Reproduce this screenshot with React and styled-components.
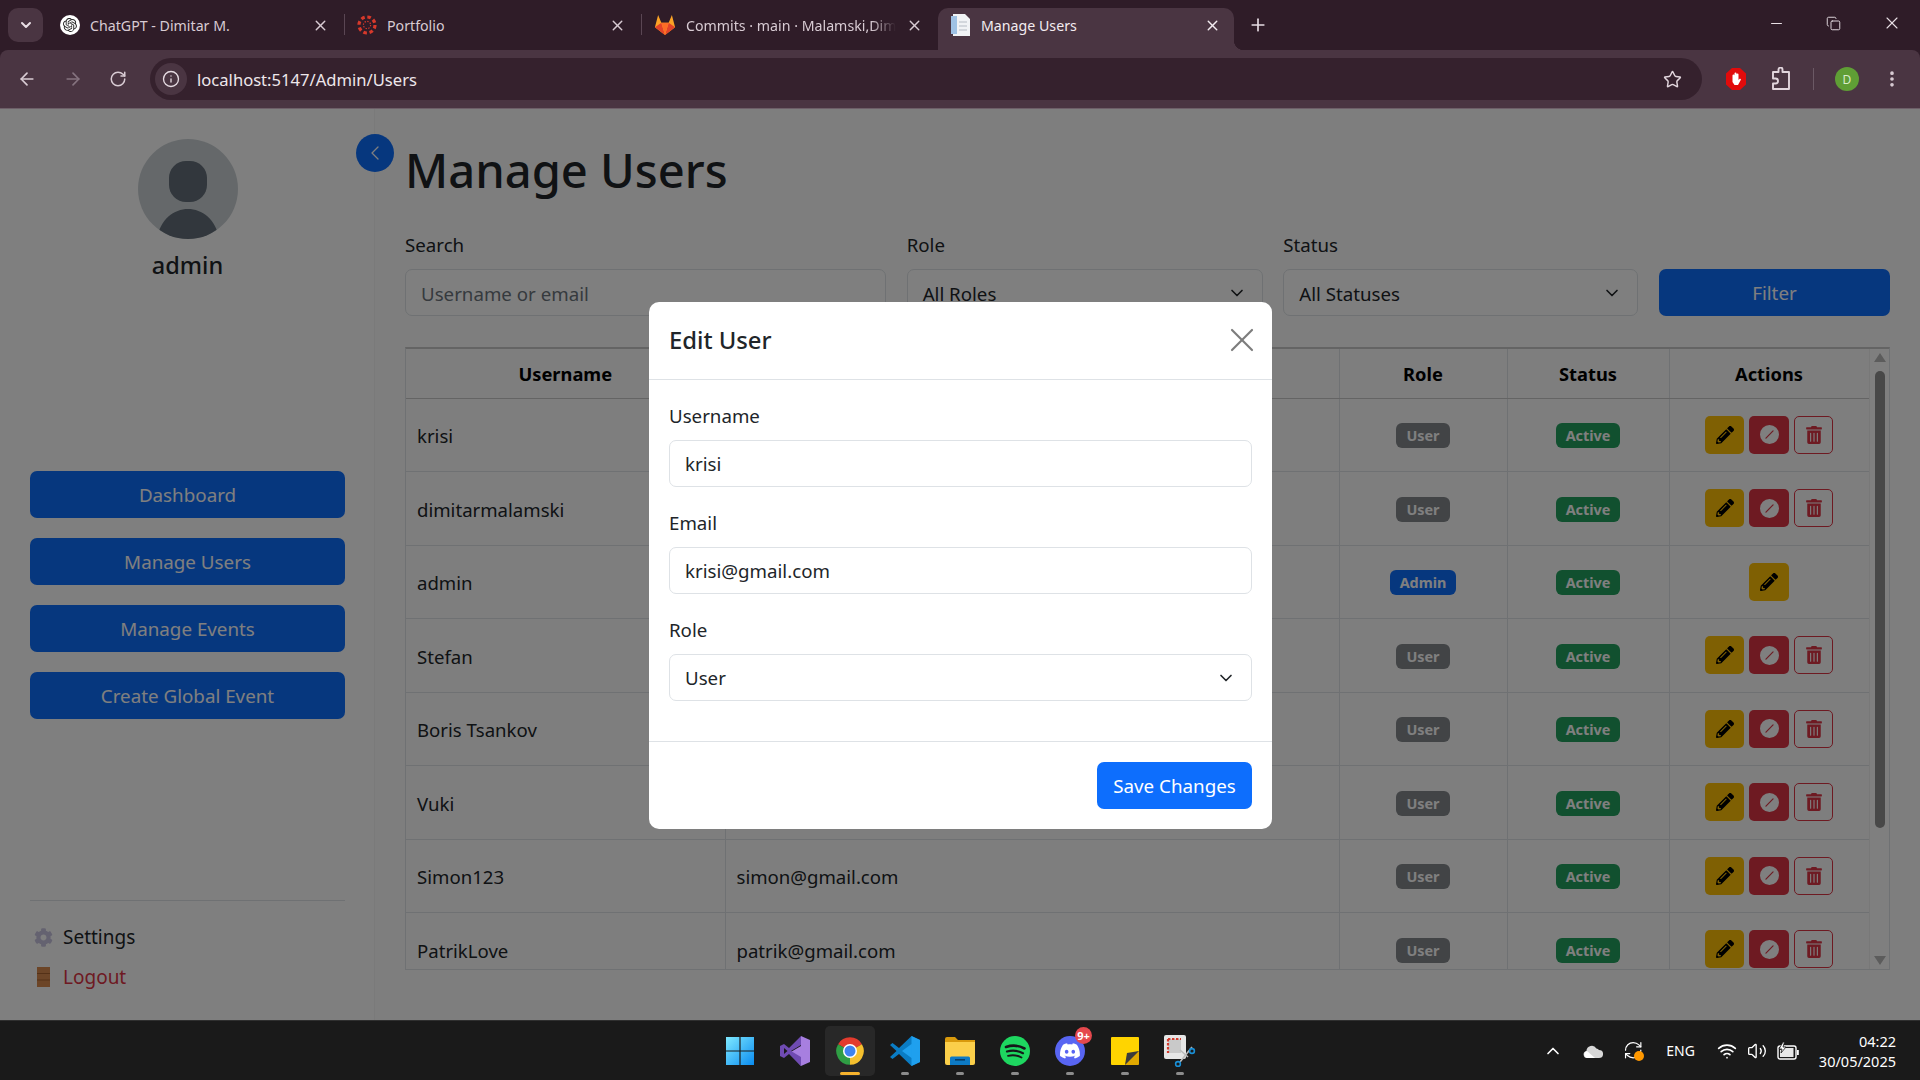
import styled, { createGlobalStyle } from 'styled-components';
import {
  ArrowLeft,
  ArrowRight,
  ChevronDown,
  ChevronLeft,
  ChevronUp,
  Copy,
  EllipsisVertical,
  Info,
  Minus,
  Plus,
  RefreshCw,
  RotateCw,
  Star,
  Volume2,
  Wifi,
  X
} from 'lucide-react';
import { FaCog, FaPencilAlt, FaTrashAlt } from 'react-icons/fa';
import { BsSlashCircleFill } from 'react-icons/bs';
import { SiDiscord, SiOpenai } from 'react-icons/si';

const GlobalStyle = createGlobalStyle`
  html, body {
    margin: 0;
    padding: 0;
    background: #fff;
  }
  * {
    box-sizing: border-box;
  }
  body {
    font-family: "Noto Sans", "Open Sans", sans-serif;
    color: #212529;
  }
`;

const Screen = styled.div`
  width: 1920px;
  height: 1080px;
  display: flex;
  flex-direction: column;
  overflow: hidden;
`;

/* browser chrome */
const BrowserFrame = styled.div`
  height: 109px;
  flex: none;
  background: #2f1c28;
  display: flex;
  flex-direction: column;
`;

const TabStrip = styled.div`
  height: 50px;
  flex: none;
  display: flex;
  align-items: flex-end;
  padding-left: 8px;
`;

const TabSearch = styled.div`
  width: 35px;
  height: 34px;
  margin: 0 4px 8px 0;
  border-radius: 10px;
  background: #4a3542;
  color: #eadfe6;
  display: flex;
  align-items: center;
  justify-content: center;
`;

const Tab = styled.div`
  position: relative;
  width: ${p => (p.$active ? '296px' : '297px')};
  height: 42px;
  padding: 0 13px 8px 13px;
  display: flex;
  align-items: center;
  gap: 10px;
  color: ${p => (p.$active ? '#f3ecf0' : '#d8cbd3')};
  background: ${p => (p.$active ? '#4a3542' : 'transparent')};
  border-radius: 10px 10px 0 0;
  font-size: 14.2px;

  &::before {
    content: '';
    display: ${p => (p.$divider ? 'block' : 'none')};
    position: absolute;
    left: 0;
    top: 6px;
    height: 21px;
    width: 1px;
    background: #5a4653;
  }

  ${p =>
    p.$active &&
    `
    &::after {
      content: '';
      position: absolute;
      right: -10px;
      bottom: 0;
      width: 10px;
      height: 10px;
      background: radial-gradient(circle at 100% 0, transparent 10px, #4a3542 10.5px);
    }
  `}
`;

const TabTitle = styled.span`
  flex: 1;
  min-width: 0;
  white-space: nowrap;
  mask-image: ${p => (p.$fade ? 'linear-gradient(90deg, #000 88%, transparent 100%)' : 'none')};
`;

const TabClose = styled(X)`
  flex: none;
  margin-right: ${p => p.$mr}px;
`;

const NewTab = styled.div`
  width: 24px;
  margin: 0 0 8px 12px;
  height: 34px;
  color: #e6dbe2;
  display: flex;
  align-items: center;
  justify-content: center;
`;

const WindowControls = styled.div`
  margin-left: auto;
  height: 42px;
  padding: 0 18px 12px 0;
  display: flex;
  align-items: center;
  gap: 41px;
  color: #e8dfe5;
`;

const Toolbar = styled.div`
  flex: 1;
  background: #4a3542;
  border-radius: 8px 8px 0 0;
  border-bottom: 1px solid #6d5f68;
  display: flex;
  align-items: center;
  padding: 0 18px 0 17px;
  color: #d9ccd4;
`;

const NavIcons = styled.div`
  width: 133px;
  display: flex;
  align-items: center;
  gap: 26px;
`;

const AddressBar = styled.div`
  width: 1552px;
  height: 42px;
  background: #35212d;
  border-radius: 21px;
  display: flex;
  align-items: center;
  padding: 0 20px 0 5px;
  color: #eee7eb;
  font-size: 16.6px;
`;

const SiteInfo = styled.div`
  width: 32px;
  height: 32px;
  border-radius: 50%;
  background: #4a3542;
  color: #e6dbe2;
  margin-right: 10px;
  display: flex;
  align-items: center;
  justify-content: center;
`;

const UrlText = styled.span`
  flex: 1;
`;

const ToolbarIcons = styled.div`
  flex: 1;
  display: flex;
  align-items: center;
  justify-content: flex-end;
`;

const StopBadge = styled.svg`
  margin-right: 25px;
`;

const ToolbarDivider = styled.div`
  width: 1px;
  height: 22px;
  background: #6b5965;
  margin: 0 21px 0 22px;
`;

const ProfileDot = styled.div`
  width: 24px;
  height: 24px;
  border-radius: 50%;
  background: #5f9e35;
  color: #d9eccb;
  font-size: 12px;
  display: flex;
  align-items: center;
  justify-content: center;
  margin-right: 23px;
`;

/* page */
const Page = styled.div`
  position: relative;
  flex: 1;
  min-height: 0;
  display: flex;
  background: #fdfdfd;
`;

const Sidebar = styled.aside`
  width: 375px;
  flex: none;
  background: #fff;
  border-right: 1px solid #f4f4f4;
  display: flex;
  flex-direction: column;
  align-items: stretch;
  padding: 30px 29px 28px 30px;
`;

const AvatarWrap = styled.div`
  align-self: center;
  width: 100px;
  height: 100px;
`;

const SideName = styled.div`
  text-align: center;
  font-size: 23.5px;
  font-weight: 500;
  line-height: 36px;
  margin-top: 8px;
`;

const SideNav = styled.nav`
  margin-top: 188px;
  display: flex;
  flex-direction: column;
  gap: 20px;
`;

const BlueButton = styled.div`
  height: 47px;
  padding-top: 1px;
  border-radius: 7px;
  background: #0d6efd;
  color: #fff;
  font-size: 18.8px;
  display: flex;
  align-items: center;
  justify-content: center;
`;

const SideFooter = styled.div`
  margin-top: auto;
  border-top: 1px solid #dee2e6;
  padding: 21px 0 0 4px;
  display: flex;
  flex-direction: column;
  gap: 10px;
`;

const SideLink = styled.div`
  height: 30px;
  display: flex;
  align-items: center;
  gap: 10px;
  font-size: 19px;
  color: ${p => p.$color || '#212529'};
`;

const LinkIcon = styled.span`
  width: 19px;
  display: flex;
  justify-content: center;
`;

const ToggleButton = styled.div`
  position: absolute;
  left: 356px;
  top: 25px;
  width: 38px;
  height: 38px;
  border-radius: 50%;
  background: #0d6efd;
  color: #fff;
  display: flex;
  align-items: center;
  justify-content: center;
`;

const Main = styled.main`
  flex: 1;
  min-width: 0;
  padding: 31px 30px 0 30px;
`;

const Title = styled.h1`
  margin: 0;
  font-size: 47.1px;
  line-height: 60px;
  font-weight: 500;
`;

const Filters = styled.div`
  margin-top: 30px;
  display: grid;
  grid-template-columns: 481px 356px 355px 231px;
  justify-content: space-between;
  align-items: end;
`;

const FieldLabel = styled.label`
  display: block;
  font-size: 18.7px;
  line-height: 30px;
  margin-bottom: 9px;
`;

const TextInput = styled.input`
  display: block;
  width: 100%;
  height: 47px;
  border: 1px solid #dee2e6;
  border-radius: 7px;
  background: #fff;
  padding: 1px 15px 0;
  font-family: inherit;
  font-size: 18.7px;
  color: #212529;
  outline: none;

  &::placeholder {
    color: #6c757d;
  }
`;

const SelectBox = styled.div`
  height: 47px;
  border: 1px solid #dee2e6;
  border-radius: 7px;
  background: #fff;
  padding: 1px 15px 0;
  font-size: 18.7px;
  display: flex;
  align-items: center;
  justify-content: space-between;
`;

const TableWrap = styled.div`
  margin-top: 31px;
  height: 623px;
  display: flex;
  overflow: hidden;
  border: 1px solid #dee2e6;
  border-top: 2px solid #c8c8c8;
`;

const TableArea = styled.div`
  flex: 1;
  min-width: 0;
  overflow: hidden;
`;

const Table = styled.table`
  width: 100%;
  table-layout: fixed;
  border-collapse: collapse;
`;

const HeadCell = styled.th`
  height: 49px;
  font-size: 18.3px;
  font-weight: 700;
  color: #000;
  text-align: center;
  border: 1px solid #dee2e6;
  border-top: 0;
  border-bottom: 1px solid #c8c8c8;
  border-left: ${p => (p.$first ? '0' : '1px solid #dee2e6')};
  padding: 1px 0 0;
`;

const Cell = styled.td`
  height: 73.5px;
  padding: ${p => (p.$center ? '0 10px' : '2px 10px 0 11px')};
  font-size: 18.6px;
  text-align: ${p => (p.$center ? 'center' : 'left')};
  border: 1px solid #dee2e6;
  border-left: ${p => (p.$first ? '0' : '1px solid #dee2e6')};
`;

const Badge = styled.span`
  display: inline-flex;
  align-items: center;
  justify-content: center;
  height: 25px;
  padding: 0 10px;
  border-radius: 6px;
  background: ${p => p.$bg};
  color: #fff;
  font-size: 14.4px;
  font-weight: 700;
`;

const Actions = styled.div`
  display: flex;
  justify-content: center;
  gap: 5px;
`;

const ActionButton = styled.div`
  width: 39.5px;
  height: 38px;
  border-radius: 5px;
  display: flex;
  align-items: center;
  justify-content: center;
  background: ${p => p.$bg || 'transparent'};
  color: ${p => p.$color};
  border: ${p => (p.$outline ? '1px solid #dc3545' : '0')};
`;

const ScrollTrack = styled.div`
  width: 20px;
  flex: none;
  background: #fff;
  border-left: 1px solid #f0f0f0;
  display: flex;
  flex-direction: column;
  align-items: center;
  padding-top: 4px;
`;

const ScrollArrow = styled.div`
  width: 0;
  height: 0;
  border-left: 6px solid transparent;
  border-right: 6px solid transparent;
  border-${p => (p.$down ? 'top' : 'bottom')}: 9px solid #b8b8b8;
`;

const ScrollThumb = styled.div`
  width: 10px;
  height: 457px;
  border-radius: 5px;
  background: #909090;
  margin-top: 9px;
  margin-bottom: auto;
`;

const ScrollEnd = styled.div`
  padding-bottom: 4px;
`;

/* modal */
const Backdrop = styled.div`
  position: absolute;
  inset: 0;
  background: rgba(0, 0, 0, 0.5);
  display: flex;
  align-items: center;
  justify-content: center;
  padding: 1px 0 0 1px;
`;

const Modal = styled.div`
  width: 623px;
  background: #fff;
  border-radius: 10px;
`;

const ModalHeader = styled.div`
  height: 78px;
  padding: 0 20px;
  border-bottom: 1px solid #dee2e6;
  display: flex;
  align-items: center;
  justify-content: space-between;
`;

const ModalTitle = styled.h5`
  margin: 0;
  font-size: 23.8px;
  font-weight: 500;
  line-height: 36px;
`;

const CloseIcon = styled(X)`
  color: #7c7c7c;
  margin-right: -10px;
`;

const ModalBody = styled.div`
  padding: 20px 20px 40px;
  display: flex;
  flex-direction: column;
  gap: 20px;
`;

const ModalLabel = styled(FieldLabel)`
  line-height: 32px;
  margin-bottom: 8px;
`;

const ModalFooter = styled.div`
  height: 88px;
  border-top: 1px solid #dee2e6;
  padding: 20px;
  display: flex;
  justify-content: flex-end;
`;

const SaveButton = styled.div`
  width: 155px;
  height: 47px;
  padding-top: 1px;
  background: #0d6efd;
  color: #fff;
  border-radius: 7px;
  font-size: 18.8px;
  display: flex;
  align-items: center;
  justify-content: center;
`;

/* taskbar */
const Taskbar = styled.footer`
  height: 60px;
  flex: none;
  background: #1a1a1a;
  border-top: 1px solid #2f2f2f;
  display: grid;
  grid-template-columns: 1fr auto 1fr;
  align-items: center;
  color: #fff;
`;

const TaskApps = styled.div`
  grid-column: 2;
  display: flex;
  gap: 5px;
`;

const TaskApp = styled.div`
  position: relative;
  width: 50px;
  height: 50px;
  border-radius: 5px;
  background: ${p => (p.$active ? '#282828' : 'transparent')};
  display: flex;
  align-items: center;
  justify-content: center;

  &::after {
    content: '';
    display: ${p => (p.$dot || p.$active ? 'block' : 'none')};
    position: absolute;
    bottom: 1px;
    left: 50%;
    transform: translateX(-50%);
    width: ${p => (p.$active ? '20px' : '8px')};
    height: 3px;
    border-radius: 2px;
    background: ${p => (p.$active ? '#f7b32d' : '#8c8c8c')};
  }
`;

const NotifyBadge = styled.span`
  position: absolute;
  right: 3px;
  top: 1px;
  width: 17px;
  height: 17px;
  border-radius: 50%;
  background: #e5484d;
  color: #fff;
  font-size: 11px;
  font-weight: 700;
  display: flex;
  align-items: center;
  justify-content: center;
`;

const Tray = styled.div`
  grid-column: 3;
  display: flex;
  align-items: center;
  justify-content: flex-end;
  padding-right: 24px;
`;

const TrayIcons = styled.div`
  display: flex;
  align-items: center;
  gap: ${p => p.$gap}px;
  margin-right: ${p => p.$mr}px;
`;

const TrayLang = styled.span`
  font-size: 14px;
  margin-right: 22px;
`;

const Clock = styled.div`
  text-align: right;
  font-size: 14.5px;
  line-height: 20px;
`;

const rows = [
  { name: 'krisi', email: 'krisi@gmail.com' },
  { name: 'dimitarmalamski' },
  { name: 'admin', admin: true },
  { name: 'Stefan' },
  { name: 'Boris Tsankov' },
  { name: 'Vuki' },
  { name: 'Simon123', email: 'simon@gmail.com' },
  { name: 'PatrikLove', email: 'patrik@gmail.com' }
];

const AvatarIcon = () => (
  <svg width="100" height="100" viewBox="0 0 100 100">
    <defs>
      <clipPath id="avatarClip">
        <circle cx="50" cy="50" r="50" />
      </clipPath>
    </defs>
    <circle cx="50" cy="50" r="50" fill="#cbd1d5" />
    <g clipPath="url(#avatarClip)" fill="#646f7a">
      <rect x="31" y="22" width="38" height="41" rx="17" />
      <path d="M19 100 C22 80 36 70 50 70 C64 70 78 80 81 100 Z" />
    </g>
  </svg>
);

const DoorIcon = () => (
  <svg width="13" height="20" viewBox="0 0 13 20">
    <rect width="13" height="20" fill="#d98a4e" />
    <path d="M0 6.5H13M0 13H13" stroke="#a8622f" strokeWidth="1" />
  </svg>
);

const ChatGptIcon = () => (
  <svg width="20" height="20" viewBox="0 0 20 20">
    <circle cx="10" cy="10" r="10" fill="#fff" />
    <g transform="translate(3 3) scale(0.58)">
      <SiOpenai size={24} color="#222" />
    </g>
  </svg>
);

const CanvasIcon = () => (
  <svg width="20" height="24" viewBox="0 0 20 24">
    <circle cx="10" cy="12" r="8" fill="none" stroke="#d8392b" strokeWidth="3.2" strokeDasharray="3.6 2.7" />
    <circle cx="10" cy="12" r="3.6" fill="none" stroke="#d8392b" strokeWidth="1.2" strokeDasharray="1.4 1.4" />
  </svg>
);

const GitlabIcon = () => (
  <svg width="22" height="24" viewBox="0 0 24 24">
    <path d="M12 23 L1 14.5 L4.5 1 L8 9.5 H16 L19.5 1 L23 14.5 Z" fill="#fca326" />
    <path d="M12 23 L1 14.5 L8 9.5 Z" fill="#e24329" />
    <path d="M12 23 L23 14.5 L16 9.5 Z" fill="#e24329" />
    <path d="M12 23 L8 9.5 H16 Z" fill="#fc6d26" />
  </svg>
);

const PageIcon = () => (
  <svg width="20" height="22" viewBox="0 0 20 22">
    <path d="M2 0H14L19 5V22H2Z" fill="#f1f3f5" />
    <rect x="0" y="2" width="6" height="18" fill="#9fc2e4" />
    <path d="M8 8H16M8 12H16M8 16H16" stroke="#c9ced4" strokeWidth="1.4" />
  </svg>
);

const StopIcon = () => (
  <StopBadge width="20" height="24" viewBox="0 0 20 24">
    <path d="M6 1H14L20 6.5V17.5L14 23H6L0 17.5V6.5Z" fill="#e10b0b" />
    <path d="M6.5 13V8.5a1 1 0 0 1 2 0V6.5a1 1 0 0 1 2 0V7.5a1 1 0 0 1 2 0V13l1.5-1.5 1 1L12 18H8.5L6.5 15Z" fill="#fff" />
  </StopBadge>
);

const ExtensionIcon = () => (
  <svg width="20" height="24" viewBox="0 0 20 24" fill="none" stroke="#e2d6dd" strokeWidth="1.9" strokeLinejoin="round">
    <path d="M2 5H7.5V2.5a2 2 0 0 1 4 0V5H18V22H2V16.5H4.5a2.5 2.5 0 0 0 0-5H2Z" />
  </svg>
);

const BatteryIcon = () => (
  <svg width="22" height="18" viewBox="0 0 22 18">
    <rect x="1" y="4" width="18" height="13" rx="2" fill="none" stroke="#fff" strokeWidth="1.4" />
    <rect x="20" y="8" width="1.8" height="5" fill="#fff" />
    <path d="M3 15V8L7 6H16.5V15Z" fill="#e8e8e8" />
    <path d="M6 0L2 7H5L4 11L9 5H6L7.5 0Z" fill="#fff" stroke="#1a1a1a" strokeWidth="0.8" />
  </svg>
);

const WindowsIcon = () => (
  <svg width="30" height="30" viewBox="0 0 30 30">
    <defs>
      <linearGradient id="winGrad" x1="0" y1="0" x2="1" y2="1">
        <stop offset="0" stopColor="#7fe9ff" />
        <stop offset="1" stopColor="#0a8cf0" />
      </linearGradient>
    </defs>
    <path d="M1 1H14.4V14.4H1ZM15.6 1H29V14.4H15.6ZM1 15.6H14.4V29H1ZM15.6 15.6H29V29H15.6Z" fill="url(#winGrad)" />
  </svg>
);

const VisualStudioIcon = () => (
  <svg width="30" height="30" viewBox="0 0 30 30">
    <path d="M21 0 L30 4 V26 L21 30 L9 17 L21 10 Z" fill="#a77fe0" />
    <path d="M21 0 L9 12 L4 8 L0 10 V20 L4 22 L9 18 L21 30 V21 L11 15 L21 9 Z" fill="#6f4bb2" />
    <path d="M4 12 L7.5 15 L4 18 Z" fill="#1a1a1a" />
  </svg>
);

const ChromeIcon = () => (
  <svg width="30" height="30" viewBox="0 0 24 24">
    <path d="M12 12 L2.47 6.5 A11 11 0 0 1 21.53 6.5 Z" fill="#e33b2e" />
    <path d="M12 12 L21.53 6.5 A11 11 0 0 1 12 23 Z" fill="#f5c02e" />
    <path d="M12 12 L12 23 A11 11 0 0 1 2.47 6.5 Z" fill="#2f9e44" />
    <circle cx="12" cy="12" r="5.6" fill="#fff" />
    <circle cx="12" cy="12" r="4.4" fill="#3f83ee" />
  </svg>
);

const VsCodeIcon = () => (
  <svg width="30" height="30" viewBox="0 0 30 30">
    <path d="M21.5 0 L30 4 V26 L21.5 30 L9 18 L2.5 23 L0 21 L6.5 15 L0 9 L2.5 7 L9 12 Z" fill="#0a7cc4" />
    <path d="M21.5 0 L30 4 V26 L21.5 30 V8 L12 15 L21.5 22 Z" fill="#1fa0ee" />
  </svg>
);

const FolderIcon = () => (
  <svg width="30" height="28" viewBox="0 0 30 28">
    <path d="M0 2 a2 2 0 0 1 2-2 H10 L13 3 H30 V8 H0 Z" fill="#d99a0c" />
    <path d="M0 5 H30 V26 a2 2 0 0 1-2 2 H2 a2 2 0 0 1-2-2 Z" fill="#fbcf4a" />
    <path d="M5 28 V21 a1.5 1.5 0 0 1 1.5-1.5 H23.5 a1.5 1.5 0 0 1 1.5 1.5 V28 Z" fill="#0d7ac4" />
    <rect x="10" y="22" width="10" height="1.6" fill="#063e68" />
  </svg>
);

const SpotifyIcon = () => (
  <svg width="30" height="30" viewBox="0 0 30 30">
    <circle cx="15" cy="15" r="15" fill="#1ed760" />
    <path d="M6 11 C12 9 19 9.5 24.5 12.5" stroke="#16181a" strokeWidth="2.6" fill="none" strokeLinecap="round" />
    <path d="M7 15.5 C12 14 18 14.5 23 17.2" stroke="#16181a" strokeWidth="2.2" fill="none" strokeLinecap="round" />
    <path d="M8 19.8 C12.5 18.8 17.5 19.2 21.5 21.5" stroke="#16181a" strokeWidth="1.8" fill="none" strokeLinecap="round" />
  </svg>
);

const DiscordIcon = () => (
  <svg width="30" height="30" viewBox="0 0 30 30">
    <circle cx="15" cy="15" r="15" fill="#5865f2" />
    <g transform="translate(5 5) scale(0.83)">
      <SiDiscord size={24} color="#fff" />
    </g>
  </svg>
);

const StickyIcon = () => (
  <svg width="28" height="28" viewBox="0 0 28 28">
    <path d="M1 0 H27 a1 1 0 0 1 1 1 V16 L16 28 H1 a1 1 0 0 1-1-1 V1 a1 1 0 0 1 1-1 Z" fill="#ffd400" />
    <path d="M28 14 V27 a1 1 0 0 1-1 1 H14 L16 18 Z" fill="#e0a800" />
    <path d="M28 14 L16 16 L14 28 Z" fill="#3b3b3b" />
  </svg>
);

const SnipIcon = () => (
  <svg width="32" height="32" viewBox="0 0 32 32">
    <rect x="0" y="0" width="22" height="24" rx="2" fill="#e6e6e6" />
    <rect x="4" y="4" width="13" height="14" fill="#c9c9c9" />
    <path d="M4 4H17M4 4V18" stroke="#d33a2c" strokeWidth="2.2" strokeDasharray="2.4 1.6" fill="none" />
    <path d="M16 15 L24 22 M28 12 L16 27" stroke="#bbb" strokeWidth="1.6" />
    <circle cx="28" cy="16" r="2.4" fill="none" stroke="#1a8fd6" strokeWidth="1.6" />
    <circle cx="14" cy="29" r="2.4" fill="none" stroke="#1a8fd6" strokeWidth="1.6" />
  </svg>
);

const CloudIcon = () => (
  <svg width="20" height="14" viewBox="0 0 20 14">
    <path d="M4 14 a3.6 3.6 0 0 1-.6-7.1 A5.4 5.4 0 0 1 13.4 4.4 a4 4 0 0 1 2.6 1.5 A4 4 0 0 1 16 14 Z" fill="#d8d8d8" />
    <path d="M4 14 a3.6 3.6 0 0 1 0-7 L12 14 Z" fill="#fff" />
  </svg>
);

const SyncIcon = () => (
  <svg width="22" height="22" viewBox="0 0 22 22">
    <g transform="scale(0.85)">
      <RefreshCw size={24} color="#fff" strokeWidth={1.4} />
    </g>
    <circle cx="16" cy="16" r="5" fill="#ff9800" />
  </svg>
);

const App = () => (
  <Screen>
    <GlobalStyle />
    <BrowserFrame>
      <TabStrip>
        <TabSearch>
          <ChevronDown size={16} strokeWidth={3} />
        </TabSearch>
        <Tab>
          <ChatGptIcon />
          <TabTitle>ChatGPT - Dimitar M.</TabTitle>
          <TabClose size={17} strokeWidth={2} $mr={2} />
        </Tab>
        <Tab $divider>
          <CanvasIcon />
          <TabTitle>Portfolio</TabTitle>
          <TabClose size={17} strokeWidth={2} $mr={2} />
        </Tab>
        <Tab $divider>
          <GitlabIcon />
          <TabTitle $fade>Commits · main · Malamski,Dim</TabTitle>
          <TabClose size={17} strokeWidth={2} $mr={2} />
        </Tab>
        <Tab $active>
          <PageIcon />
          <TabTitle>Manage Users</TabTitle>
          <TabClose size={17} strokeWidth={2} $mr={0} />
        </Tab>
        <NewTab>
          <Plus size={20} strokeWidth={2} />
        </NewTab>
        <WindowControls>
          <Minus size={17} strokeWidth={1.5} />
          <Copy size={15} strokeWidth={1.5} />
          <X size={20} strokeWidth={1.3} />
        </WindowControls>
      </TabStrip>
      <Toolbar>
        <NavIcons>
          <ArrowLeft size={20} strokeWidth={2} />
          <ArrowRight size={20} strokeWidth={2} color="#85737f" />
          <RotateCw size={18} strokeWidth={2} />
        </NavIcons>
        <AddressBar>
          <SiteInfo>
            <Info size={18} strokeWidth={1.8} />
          </SiteInfo>
          <UrlText>localhost:5147/Admin/Users</UrlText>
          <Star size={19} strokeWidth={1.8} color="#e2d6dd" />
        </AddressBar>
        <ToolbarIcons>
          <StopIcon />
          <ExtensionIcon />
          <ToolbarDivider />
          <ProfileDot>D</ProfileDot>
          <EllipsisVertical size={20} strokeWidth={2.4} />
        </ToolbarIcons>
      </Toolbar>
    </BrowserFrame>

    <Page>
      <Sidebar>
        <AvatarWrap>
          <AvatarIcon />
        </AvatarWrap>
        <SideName>admin</SideName>
        <SideNav>
          <BlueButton>Dashboard</BlueButton>
          <BlueButton>Manage Users</BlueButton>
          <BlueButton>Manage Events</BlueButton>
          <BlueButton>Create Global Event</BlueButton>
        </SideNav>
        <SideFooter>
          <SideLink>
            <LinkIcon>
              <FaCog size={19} color="#c9c4e0" />
            </LinkIcon>
            Settings
          </SideLink>
          <SideLink $color="#dc3545">
            <LinkIcon>
              <DoorIcon />
            </LinkIcon>
            Logout
          </SideLink>
        </SideFooter>
      </Sidebar>
      <ToggleButton>
        <ChevronLeft size={24} strokeWidth={1.3} />
      </ToggleButton>
      <Main>
        <Title>Manage Users</Title>
        <Filters>
          <div>
            <FieldLabel>Search</FieldLabel>
            <TextInput placeholder="Username or email" readOnly />
          </div>
          <div>
            <FieldLabel>Role</FieldLabel>
            <SelectBox>
              All Roles
              <ChevronDown size={20} strokeWidth={2} />
            </SelectBox>
          </div>
          <div>
            <FieldLabel>Status</FieldLabel>
            <SelectBox>
              All Statuses
              <ChevronDown size={20} strokeWidth={2} />
            </SelectBox>
          </div>
          <BlueButton>Filter</BlueButton>
        </Filters>
        <TableWrap>
          <TableArea>
            <Table>
              <colgroup>
                <col style={{ width: 319 }} />
                <col style={{ width: 614 }} />
                <col style={{ width: 168 }} />
                <col style={{ width: 162 }} />
                <col style={{ width: 200 }} />
              </colgroup>
              <thead>
                <tr>
                  <HeadCell $first>Username</HeadCell>
                  <HeadCell>Email</HeadCell>
                  <HeadCell>Role</HeadCell>
                  <HeadCell>Status</HeadCell>
                  <HeadCell>Actions</HeadCell>
                </tr>
              </thead>
              <tbody>
                {rows.map(row => (
                  <tr key={row.name}>
                    <Cell $first>{row.name}</Cell>
                    <Cell>{row.email}</Cell>
                    <Cell $center>
                      {row.admin ? (
                        <Badge $bg="#0d6efd">Admin</Badge>
                      ) : (
                        <Badge $bg="#84888c">User</Badge>
                      )}
                    </Cell>
                    <Cell $center>
                      <Badge $bg="#22a05e">Active</Badge>
                    </Cell>
                    <Cell $center>
                      <Actions>
                        <ActionButton $bg="#ffc107" $color="#000">
                          <FaPencilAlt size={18} />
                        </ActionButton>
                        {!row.admin && (
                          <ActionButton $bg="#dc3545" $color="#fff">
                            <BsSlashCircleFill size={19} />
                          </ActionButton>
                        )}
                        {!row.admin && (
                          <ActionButton $outline $color="#dc3545">
                            <FaTrashAlt size={18} />
                          </ActionButton>
                        )}
                      </Actions>
                    </Cell>
                  </tr>
                ))}
              </tbody>
            </Table>
          </TableArea>
          <ScrollTrack>
            <ScrollArrow />
            <ScrollThumb />
            <ScrollEnd>
              <ScrollArrow $down />
            </ScrollEnd>
          </ScrollTrack>
        </TableWrap>
      </Main>

      <Backdrop>
        <Modal>
          <ModalHeader>
            <ModalTitle>Edit User</ModalTitle>
            <CloseIcon size={40} strokeWidth={1.3} />
          </ModalHeader>
          <ModalBody>
            <div>
              <ModalLabel>Username</ModalLabel>
              <TextInput value="krisi" readOnly />
            </div>
            <div>
              <ModalLabel>Email</ModalLabel>
              <TextInput value="krisi@gmail.com" readOnly />
            </div>
            <div>
              <ModalLabel>Role</ModalLabel>
              <SelectBox>
                User
                <ChevronDown size={20} strokeWidth={2} />
              </SelectBox>
            </div>
          </ModalBody>
          <ModalFooter>
            <SaveButton>Save Changes</SaveButton>
          </ModalFooter>
        </Modal>
      </Backdrop>
    </Page>

    <Taskbar>
      <TaskApps>
        <TaskApp>
          <WindowsIcon />
        </TaskApp>
        <TaskApp>
          <VisualStudioIcon />
        </TaskApp>
        <TaskApp $active>
          <ChromeIcon />
        </TaskApp>
        <TaskApp $dot>
          <VsCodeIcon />
        </TaskApp>
        <TaskApp $dot>
          <FolderIcon />
        </TaskApp>
        <TaskApp $dot>
          <SpotifyIcon />
        </TaskApp>
        <TaskApp $dot>
          <DiscordIcon />
          <NotifyBadge>9+</NotifyBadge>
        </TaskApp>
        <TaskApp $dot>
          <StickyIcon />
        </TaskApp>
        <TaskApp $dot>
          <SnipIcon />
        </TaskApp>
      </TaskApps>
      <Tray>
        <TrayIcons $gap={20} $mr={21}>
          <ChevronUp size={20} strokeWidth={2} />
          <CloudIcon />
          <SyncIcon />
        </TrayIcons>
        <TrayLang>ENG</TrayLang>
        <TrayIcons $gap={10} $mr={20}>
          <Wifi size={20} strokeWidth={2} />
          <Volume2 size={20} strokeWidth={1.6} />
          <BatteryIcon />
        </TrayIcons>
        <Clock>
          04:22
          <br />
          30/05/2025
        </Clock>
      </Tray>
    </Taskbar>
  </Screen>
);

export default App;
